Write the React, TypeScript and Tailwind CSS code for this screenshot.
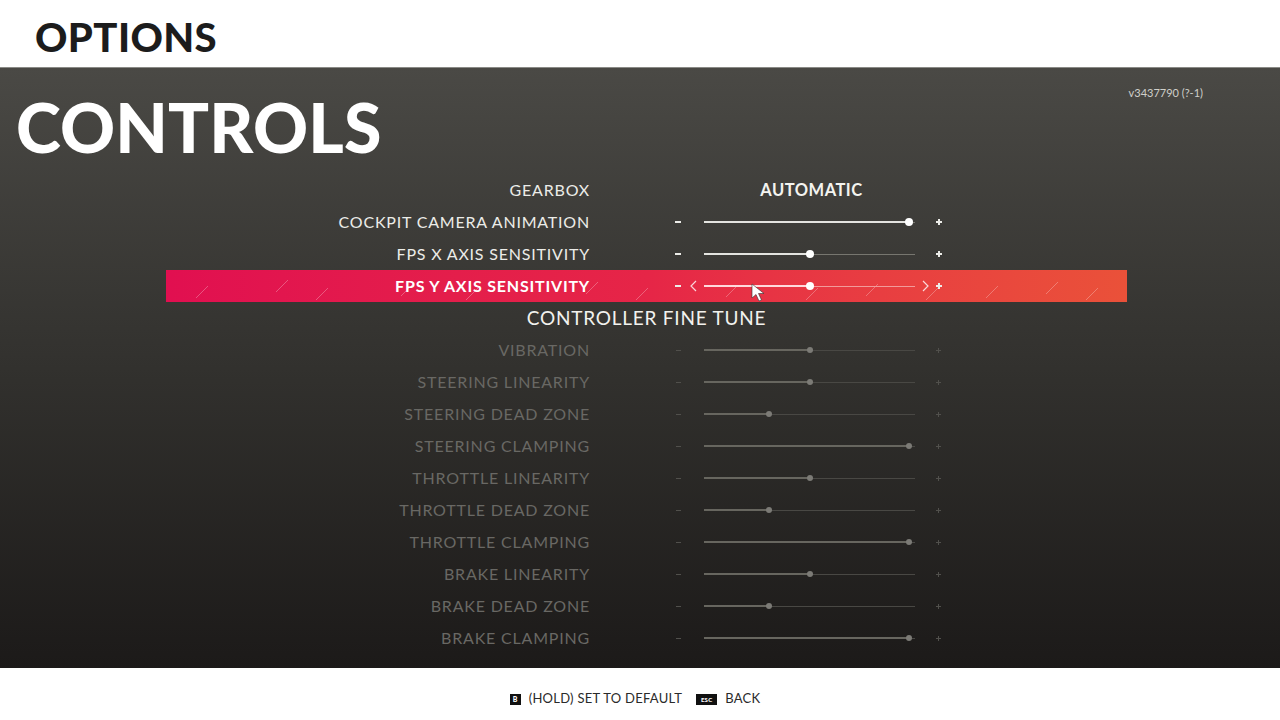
import React from "react";

type Row = {
  label: string;
  value?: number;
  text?: string;
  dim?: boolean;
  active?: boolean;
  heading?: boolean;
};

const rows: Row[] = [
  { label: "GEARBOX", text: "AUTOMATIC" },
  { label: "COCKPIT CAMERA ANIMATION", value: 1 },
  { label: "FPS X AXIS SENSITIVITY", value: 0.5 },
  { label: "FPS Y AXIS SENSITIVITY", value: 0.5, active: true },
  { label: "CONTROLLER FINE TUNE", heading: true },
  { label: "VIBRATION", value: 0.5, dim: true },
  { label: "STEERING LINEARITY", value: 0.5, dim: true },
  { label: "STEERING DEAD ZONE", value: 0.31, dim: true },
  { label: "STEERING CLAMPING", value: 1, dim: true },
  { label: "THROTTLE LINEARITY", value: 0.5, dim: true },
  { label: "THROTTLE DEAD ZONE", value: 0.31, dim: true },
  { label: "THROTTLE CLAMPING", value: 1, dim: true },
  { label: "BRAKE LINEARITY", value: 0.5, dim: true },
  { label: "BRAKE DEAD ZONE", value: 0.31, dim: true },
  { label: "BRAKE CLAMPING", value: 1, dim: true },
];

function Streaks() {
  const marks = [
    [30, 28], [110, 22], [150, 30], [235, 26], [300, 30], [420, 24], [470, 30],
    [560, 27], [640, 30], [700, 26], [760, 30], [820, 28], [880, 24], [920, 30],
  ];
  return (
    <svg className="absolute inset-0 pointer-events-none" width="961" height="32" viewBox="0 0 961 32">
      {marks.map(([x, y], i) => (
        <line key={i} x1={x} y1={y} x2={x + 12} y2={y - 12} stroke="rgba(255,255,255,0.28)" strokeWidth="1" />
      ))}
    </svg>
  );
}

function Slider({ value, dim, active }: { value: number; dim?: boolean; active?: boolean }) {
  const fill = dim ? "bg-[#67665f]" : active ? "bg-[#ffd9dc]" : "bg-[#e4e4e0]";
  const rest = dim ? "bg-[#494844]" : active ? "bg-[#f29a9a]" : "bg-[#77766f]";
  const knob = dim ? "w-[6px] h-[6px] bg-[#7c7b76]" : "w-[8px] h-[8px] bg-white";
  const pos = Math.min(value * 211, 205);
  return (
    <div className="relative w-[211px] h-[8px] flex items-center">
      <div className={`h-[2px] ${fill}`} style={{ width: pos }} />
      <div className={`h-px flex-1 ${rest}`} />
      <div className={`absolute rounded-full ${knob}`} style={{ left: pos - (dim ? 3 : 4) }} />
    </div>
  );
}

function Sign({ plus, dim }: { plus?: boolean; dim?: boolean }) {
  const c = dim ? "bg-[#51504c]" : "bg-[#ecece8]";
  return (
    <div className="relative w-[7px] h-[7px] flex items-center justify-center">
      <div className={`${dim ? "w-[5px] h-px" : "w-[6px] h-[2px]"} ${c}`} />
      {plus && <div className={`absolute ${dim ? "w-px h-[5px]" : "w-[2px] h-[6px]"} ${c}`} />}
    </div>
  );
}

function OptionRow({ row }: { row: Row }) {
  if (row.heading) {
    return (
      <div className="h-[32px] flex items-center justify-center text-[19px] tracking-[0.04em] text-[#f2f2ee]">
        {row.label}
      </div>
    );
  }
  const labelColor = row.dim ? "text-[#696864]" : "text-[#ecece8]";
  return (
    <div
      className={`relative h-[32px] flex items-center ${
        row.active ? "bg-gradient-to-r from-[#e10f50] via-[#e62547] to-[#ea5139]" : ""
      }`}
    >
      {row.active && <Streaks />}
      <div
        className={`relative w-[424px] text-right text-[16px] tracking-[0.05em] ${
          row.active ? "font-bold text-white" : labelColor
        }`}
      >
        {row.label}
      </div>
      <div className="w-[84px]" />
      {row.text ? (
        <>
          <div className="w-[32px]" />
          <div className="w-[211px] text-center text-[16.5px] font-bold tracking-[0.03em] text-[#f4f4f0]">
            {row.text}
          </div>
        </>
      ) : (
        <>
          <div className="relative w-[8px] flex justify-center">
            <Sign dim={row.dim} />
          </div>
          <div className="relative w-[22px] flex justify-center">
            {row.active && (
              <svg width="7" height="12" viewBox="0 0 7 12">
                <path d="M6 1 L1 6 L6 11" fill="none" stroke="rgba(255,255,255,0.8)" strokeWidth="1.2" />
              </svg>
            )}
          </div>
          <Slider value={row.value ?? 0} dim={row.dim} active={row.active} />
          <div className="relative w-[20px] flex justify-center">
            {row.active && (
              <svg width="7" height="12" viewBox="0 0 7 12">
                <path d="M1 1 L6 6 L1 11" fill="none" stroke="rgba(255,255,255,0.8)" strokeWidth="1.2" />
              </svg>
            )}
          </div>
          <Sign plus dim={row.dim} />
        </>
      )}
      {row.active && (
        <svg className="absolute left-[585px] top-[13px]" width="16" height="20" viewBox="0 0 16 20">
          <path d="M1 1 L1 15 L5 11.5 L8 18 L10.5 17 L7.5 10.5 L13 10.5 Z" fill="white" stroke="#333" strokeWidth="0.6" />
        </svg>
      )}
    </div>
  );
}

export default function App() {
  return (
    <div className="w-[1280px] h-[720px] flex flex-col overflow-hidden font-['Lato',sans-serif]">
      <header className="h-[67px] bg-white flex items-center px-[35px] pt-[7px]">
        <h1 className="text-[40px] leading-none font-black tracking-[0.01em] text-[#1c1c1c]">OPTIONS</h1>
      </header>

      <main className="h-[601px] bg-gradient-to-b from-[#4a4945] via-[#32312e] to-[#1c1a19] flex flex-col border-t border-[#8a8a86]">
        <div className="flex justify-between items-start">
          <h2 className="pl-[16px] pt-[25px] text-[68px] leading-none font-black tracking-[0.003em] text-white">
            CONTROLS
          </h2>
          <span className="pr-[77px] pt-[17px] text-[11px] text-[#cfcfca]">v3437790 (?-1)</span>
        </div>

        <div className="ml-[166px] w-[961px] mt-[13px] flex flex-col">
          {rows.map((r) => (
            <OptionRow key={r.label} row={r} />
          ))}
        </div>
      </main>

      <footer className="h-[52px] bg-white flex items-center justify-center gap-[8px] pt-[10px] pr-[10px] text-[13px] tracking-[0.02em] text-[#2a2a2a]">
        <span className="w-[11px] h-[11px] bg-[#111] text-white text-[7px] font-black flex items-center justify-center">
          B
        </span>
        <span>(HOLD) SET TO DEFAULT</span>
        <span className="ml-[6px] w-[21px] h-[11px] bg-[#111] text-white text-[6px] font-black flex items-center justify-center">
          ESC
        </span>
        <span>BACK</span>
      </footer>
    </div>
  );
}
